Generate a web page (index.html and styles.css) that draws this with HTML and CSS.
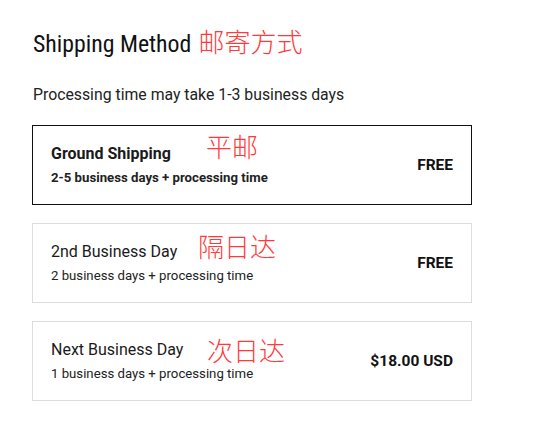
FILE: index.html
```html
<!DOCTYPE html>
<html>
<head>
<meta charset="utf-8">
<link rel="stylesheet" href="styles.css">
</head>
<body>
<div class="page">
  <div class="heading-row">
    <h2 class="heading">Shipping Method</h2>
    <span class="note note-title">邮寄方式</span>
  </div>
  <p class="lead">Processing time may take 1-3 business days</p>
  <div class="options">
    <div class="card selected">
      <div class="info">
        <div class="name">Ground Shipping</div>
        <div class="desc">2-5 business days + processing time</div>
      </div>
      <div class="price">FREE</div>
      <span class="note note-1">平邮</span>
    </div>
    <div class="card">
      <div class="info">
        <div class="name">2nd Business Day</div>
        <div class="desc">2 business days + processing time</div>
      </div>
      <div class="price">FREE</div>
      <span class="note note-2">隔日达</span>
    </div>
    <div class="card">
      <div class="info">
        <div class="name">Next Business Day</div>
        <div class="desc">1 business days + processing time</div>
      </div>
      <div class="price">$18.00 USD</div>
      <span class="note note-3">次日达</span>
    </div>
  </div>
</div>
</body>
</html>
```
FILE: styles.css
```css
html, body {
  margin: 0;
  padding: 0;
  background: #fff;
}
body {
  font-family: Roboto, "Liberation Sans", sans-serif;
  color: #111;
}
.page {
  padding: 28px 0 0 32px;
  width: 440px;
}
.heading-row {
  display: flex;
  align-items: flex-start;
  gap: 7px;
  padding-left: 1px;
}
.heading {
  margin: 0;
  font-family: "Roboto Condensed", "Liberation Sans Narrow", "DejaVu Sans Condensed", sans-serif;
  font-weight: 400;
  font-size: 23.8px;
  line-height: 32px;
  color: #111;
}
.note {
  font-family: "Noto Sans CJK SC", sans-serif;
  font-weight: 300;
  color: #ff3a3a;
  font-size: 26px;
  line-height: 30px;
}
.note-title {
  line-height: 26px;
  margin-top: 0;
}
.lead {
  margin: 25px 0 0 1px;
  font-size: 15.8px;
  line-height: 20px;
  color: #222;
}
.options {
  display: flex;
  flex-direction: column;
  gap: 18px;
  margin-top: 20px;
}
.card {
  position: relative;
  box-sizing: border-box;
  height: 80px;
  border: 1px solid #dcdcdc;
  display: flex;
  align-items: center;
  justify-content: space-between;
  padding: 0 18px 0 18px;
}
.card.selected {
  border-color: #111;
}
.name {
  font-size: 16px;
  line-height: 20px;
  color: #1a1a1a;
}
.desc {
  margin-top: 6px;
  font-size: 13.2px;
  line-height: 16px;
  color: #222;
}
.selected .name {
  font-weight: 700;
}
.selected .desc {
  font-weight: 700;
  font-size: 13.2px;
}
.price {
  font-weight: 700;
  font-size: 15.5px;
  color: #111;
}
.note-1 {
  position: absolute;
  left: 173px;
  top: 5px;
}
.note-2 {
  position: absolute;
  left: 165px;
  top: 7px;
}
.note-3 {
  position: absolute;
  left: 174px;
  top: 13px;
}
```
